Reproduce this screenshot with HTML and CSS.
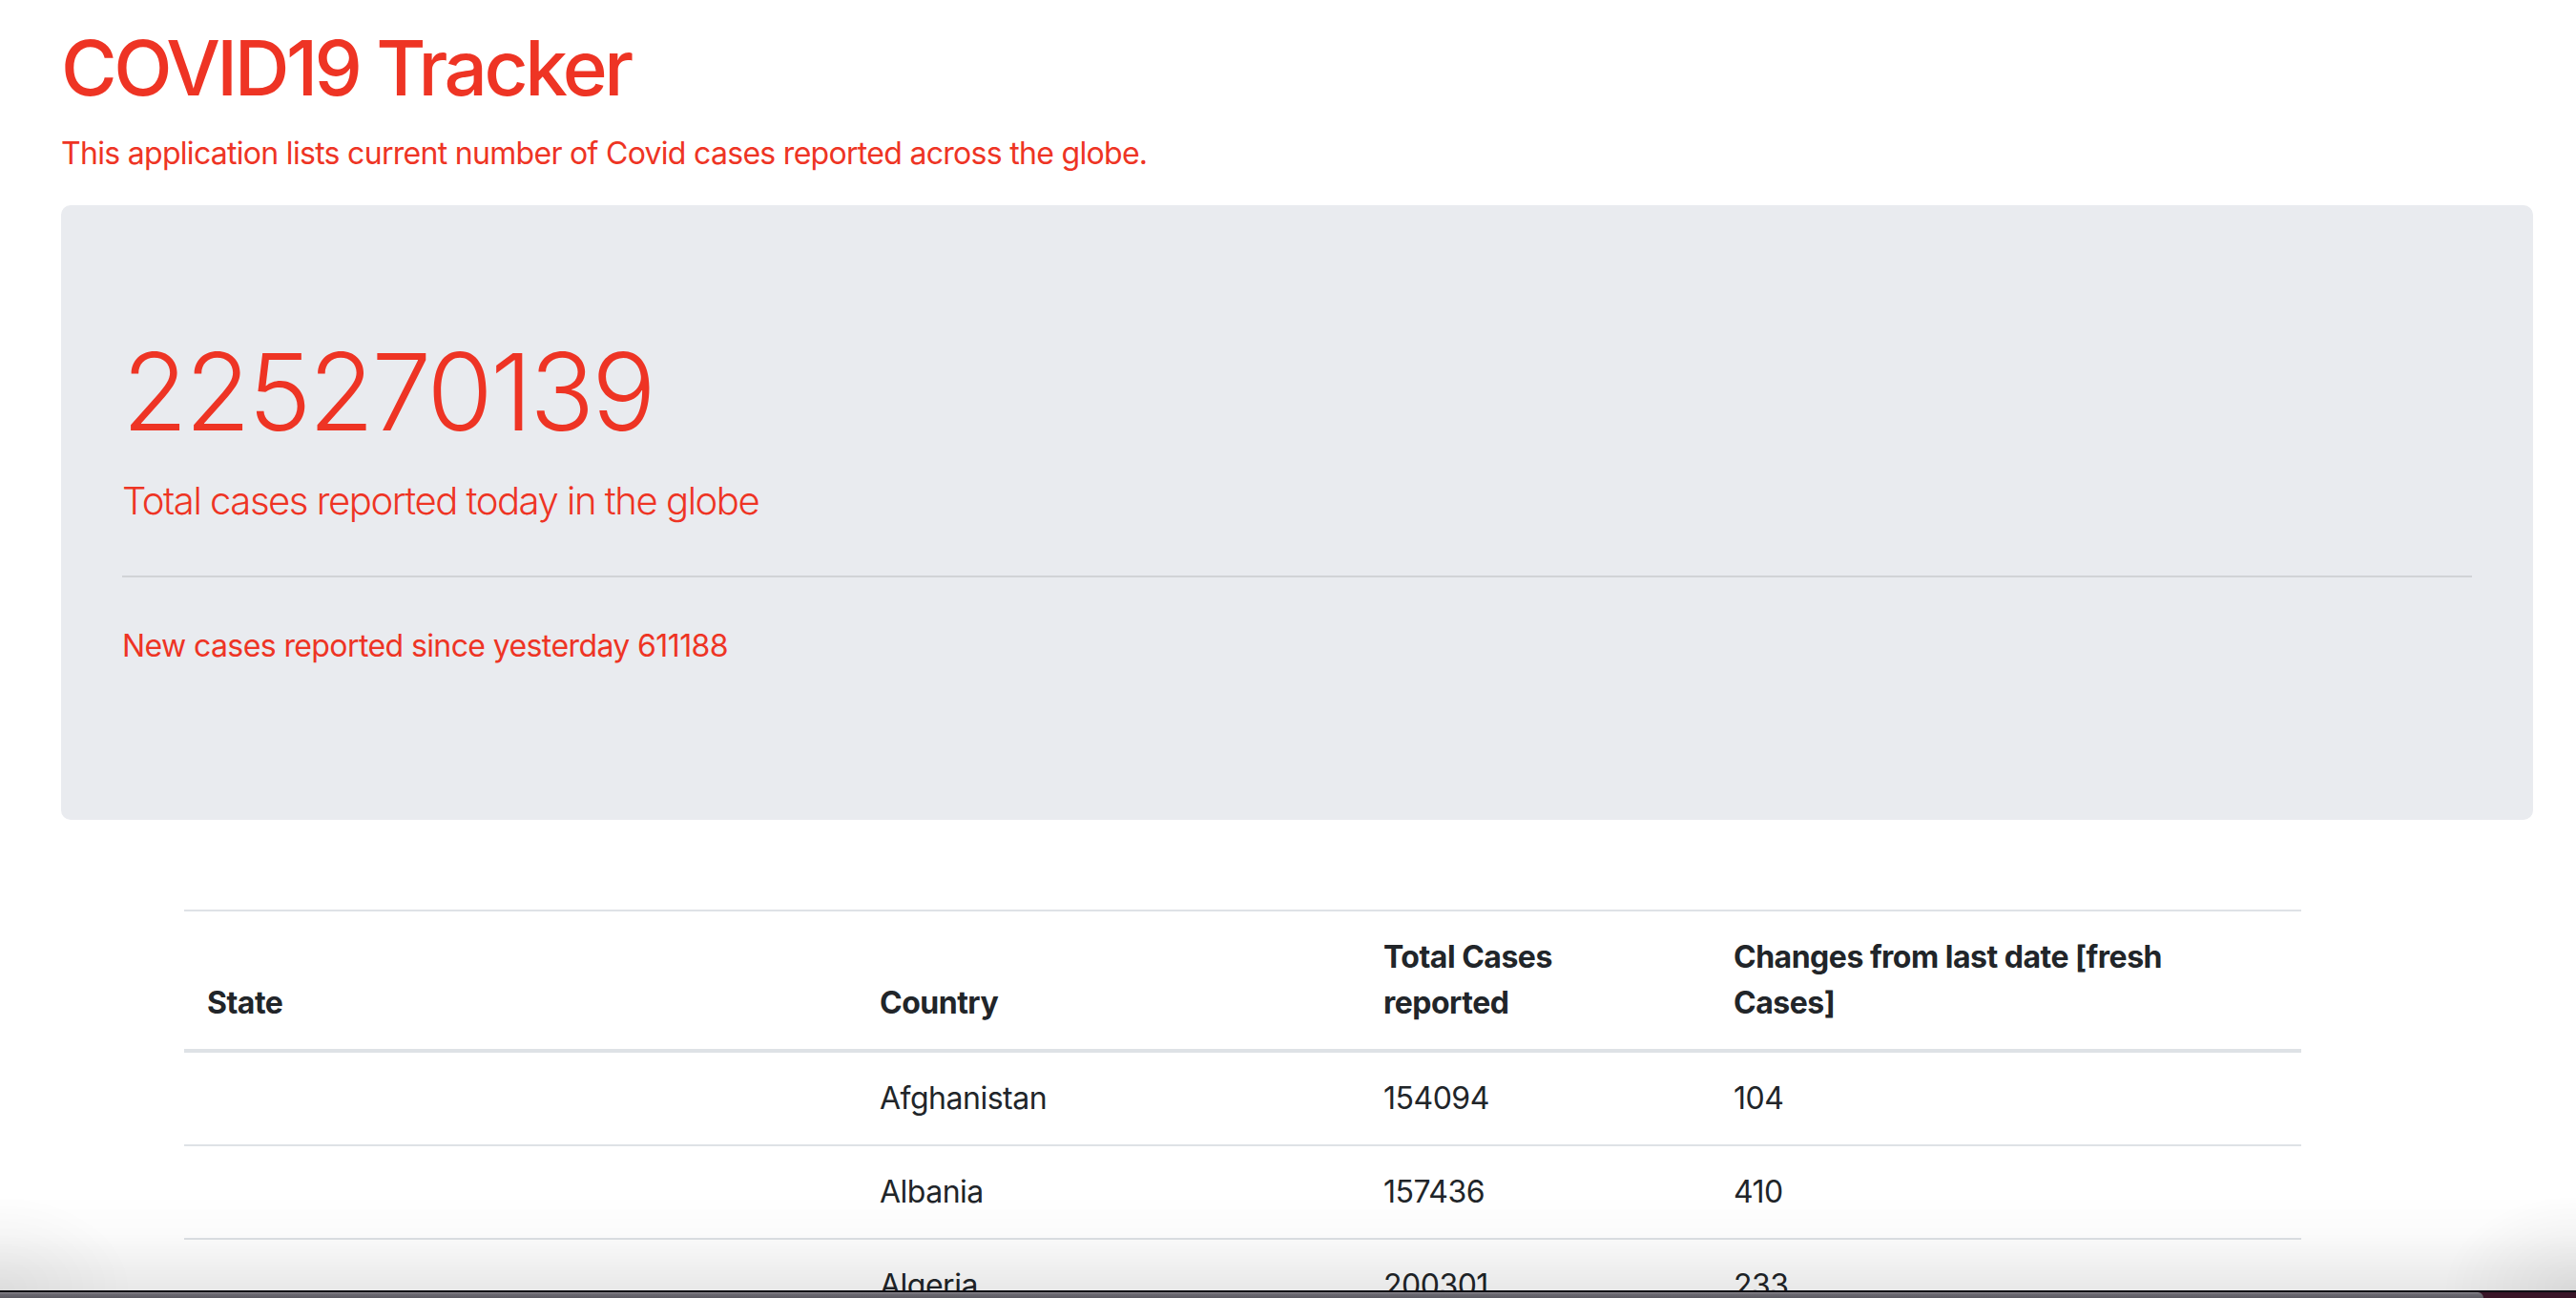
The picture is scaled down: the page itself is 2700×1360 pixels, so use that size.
FILE: index.html
```html
<!DOCTYPE html>
<html lang="en">
<head>
<meta charset="utf-8">
<title>COVID19 Tracker</title>
<link rel="stylesheet" href="styles.css">
</head>
<body>
<div class="page">
  <h1 class="title">COVID19 Tracker</h1>
  <p class="subtitle">This application lists current number of Covid cases reported across the globe.</p>

  <div class="jumbotron">
    <h1 class="display">225270139</h1>
    <p class="lead">Total cases reported today in the globe</p>
    <hr class="divider">
    <p class="new-cases">New cases reported since yesterday 611188</p>
  </div>

  <div class="table-wrap">
    <table class="cases">
      <colgroup>
        <col class="c-state">
        <col class="c-country">
        <col class="c-total">
        <col class="c-change">
      </colgroup>
      <thead>
        <tr>
          <th>State</th>
          <th>Country</th>
          <th><span class="th-total">Total Cases reported</span></th>
          <th><span class="th-change">Changes from last date [fresh Cases]</span></th>
        </tr>
      </thead>
      <tbody>
        <tr><td></td><td>Afghanistan</td><td>154094</td><td>104</td></tr>
        <tr><td></td><td>Albania</td><td>157436</td><td>410</td></tr>
        <tr><td></td><td>Algeria</td><td>200301</td><td>233</td></tr>
        <tr><td></td><td>Andorra</td><td>15108</td><td>0</td></tr>
      </tbody>
    </table>
  </div>
</div>

<div class="shade"></div>
<div class="dock"><div class="dock-win"></div></div>
</body>
</html>
```

FILE: styles.css
```css
html, body {
  margin: 0;
  padding: 0;
  background: #ffffff;
}

body {
  font-family: Inter, "Liberation Sans", sans-serif;
  color: #212529;
  font-size: 32px;
  line-height: 48px;
  overflow: hidden;
}

.page {
  padding: 23px 45px 0 64px;
}

.title {
  margin: 0 0 18px 0;
  font-size: 80px;
  line-height: 96px;
  font-weight: 500;
  color: #ee3424;
  letter-spacing: -3.5px;
}

.subtitle {
  margin: 0 0 30px 0;
  font-size: 32px;
  line-height: 48px;
  color: #ee3424;
  letter-spacing: -0.7px;
}

.jumbotron {
  background: #e9ebef;
  border-radius: 10px;
  padding: 128px 64px 126px 64px;
  color: #ee3424;
}

.display {
  margin: 0 0 18px 0;
  font-size: 112px;
  line-height: 134px;
  font-weight: 300;
  letter-spacing: -2.8px;
}

.lead {
  margin: 0 0 32px 0;
  font-size: 40px;
  line-height: 60px;
  font-weight: 300;
  letter-spacing: -1.45px;
}

.divider {
  margin: 48px 0;
  border: 0;
  border-top: 2px solid rgba(0, 0, 0, 0.1);
}

.new-cases {
  margin: 0 0 32px 0;
  font-size: 32px;
  line-height: 48px;
  letter-spacing: -0.6px;
}

.table-wrap {
  margin: 94px 0 0 129px;
  width: 2219px;
}

.cases {
  width: 2219px;
  table-layout: fixed;
  border-collapse: collapse;
  color: #212529;
}

.c-state { width: 705px; }
.c-country { width: 528px; }
.c-total { width: 367px; }
.c-change { width: 619px; }

.cases th,
.cases td {
  padding: 24px;
  text-align: left;
  border-top: 2px solid #dee2e6;
  font-size: 32px;
  line-height: 48px;
  letter-spacing: -0.5px;
}

.cases th {
  font-weight: 700;
  vertical-align: bottom;
  border-bottom: 4px solid #dee2e6;
}

.th-total {
  display: block;
  max-width: 240px;
}

.th-change {
  display: block;
  max-width: 480px;
}

.cases td {
  font-weight: 400;
  vertical-align: top;
}

.shade {
  position: fixed;
  left: 0;
  right: 0;
  bottom: 8px;
  height: 100px;
  pointer-events: none;
  background:
    radial-gradient(ellipse 140px 100px at 100% 100%, rgba(0, 0, 0, 0.07), rgba(0, 0, 0, 0) 100%),
    radial-gradient(ellipse 140px 100px at 0% 100%, rgba(0, 0, 0, 0.05), rgba(0, 0, 0, 0) 100%),
    linear-gradient(to bottom, rgba(0, 0, 0, 0) 0%, rgba(0, 0, 0, 0.015) 40%, rgba(0, 0, 0, 0.09) 100%);
}

.dock {
  position: fixed;
  left: 0;
  right: 0;
  bottom: 0;
  height: 6px;
  border-top: 2px solid #0f0e14;
  background: #3a1528;
}

.dock-win {
  width: 2603px;
  height: 6px;
  border-top-right-radius: 6px;
  background: linear-gradient(to bottom, #8d8a92 0px, #6a6870 2px, #5c5a62 6px);
}
```
